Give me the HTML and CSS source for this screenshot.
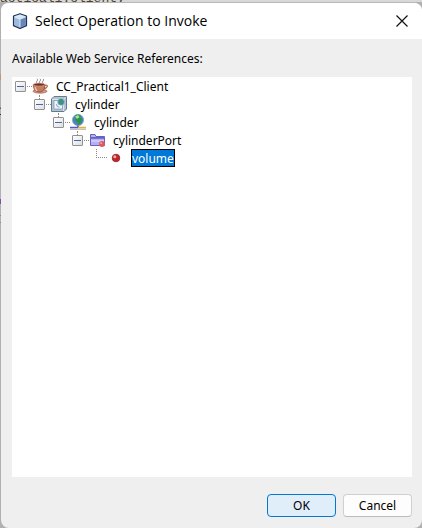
FILE: index.html
```html
<!DOCTYPE html>
<html lang="en">
<head>
<meta charset="utf-8">
<meta name="viewport" content="width=device-width, initial-scale=1">
<title>Select Operation to Invoke</title>
<link rel="stylesheet" href="styles.css">
</head>
<body>
<div class="editor" aria-hidden="true"><span>actical1.client;</span></div>
<main class="dialog" role="dialog" aria-labelledby="title">
  <header class="titlebar">
    <svg class="app-icon" viewBox="0 0 16 16">
      <path d="M8 .7 14.500 3v9.600L8 15.500 1.500 12.600V3z" fill="#8fb0d8" stroke="#253055" stroke-width="1.200" stroke-linejoin="round"/>
      <path d="M2.200 3.500 8 1.500l5.800 2L8 6z" fill="#d8e8f6"/>
      <path d="M2.200 4 8 6.300v8.300l-5.800-2.500z" fill="#9cbade"/>
      <path d="M13.800 4 8 6.300v8.300l5.800-2.500z" fill="#6787b8"/>
      <path d="M2.500 4 8 6.200 13.500 4M8 6.200V14" fill="none" stroke="#eef6fc" stroke-width=".8"/>
    </svg>
    <h1 id="title">Select Operation to Invoke</h1>
    <button class="close" type="button" aria-label="Close">
      <svg viewBox="0 0 12 12"><path d="M.5.5l11 11M11.500.5l-11 11" fill="none" stroke="#111" stroke-width="1.200"/></svg>
    </button>
  </header>
  <section class="content">
    <h2 id="tree-label">Available Web Service References:</h2>
    <div class="tree-panel">
      <ul class="tree" role="tree" aria-labelledby="tree-label">
        <li role="treeitem" aria-expanded="true">
          <div class="row">
            <button class="toggle" type="button" aria-label="Collapse"></button>
            <svg class="icon" viewBox="0 0 16 16">
              <path d="M5 5.500Q3.500 4 5 3T5 .8M8 5.500Q6.500 4 8 3T8 .8M11 5.500Q9.500 4 11 3T11 .8" fill="none" stroke="#8b8783" stroke-width=".9"/>
              <ellipse cx="8" cy="13.200" rx="7" ry="2" fill="#d39a82" stroke="#8d5542" stroke-width=".6"/>
              <path d="M12.500 7.500q3.200-1 2.700 1-.8 2-4 2.500" fill="none" stroke="#b4684e" stroke-width="1.300"/>
              <path d="M1.300 6.500h11.700q.3 5-3.200 7.300H5Q1 11.500 1.300 6.500z" fill="#c47b61" stroke="#8a4632" stroke-width=".7"/>
              <ellipse cx="7.100" cy="6.600" rx="5.700" ry="1.500" fill="#713222" stroke="#dfaa93" stroke-width=".6"/>
              <path d="M3 9q.5 2.500 2.200 4" fill="none" stroke="#efc4b1" stroke-width="1.300"/>
            </svg>
            <span class="name">CC_Practical1_Client</span>
          </div>
          <ul role="group">
            <li role="treeitem" aria-expanded="true">
              <div class="row">
                <button class="toggle" type="button" aria-label="Collapse"></button>
                <svg class="icon" viewBox="0 0 16 16">
                  <path d="M.5 3 3 .5h12.500V13L13 15.500H.5z" fill="#b5c3d0" stroke="#627b92"/>
                  <path d="M1 3.500h11.500V15M12.500 3.500 15 1" fill="none" stroke="#edf3f8" stroke-width=".7"/>
                  <path d="M3 4.500h8.500v8.500H3z" fill="#eef5fa" stroke="#7890a5" stroke-width=".7"/>
                  <circle cx="10" cy="6" r="3.300" fill="#4b83b8" stroke="#8db7d2" stroke-width=".6"/>
                  <path d="M8.500 3.300q2-.9 3.500.7l-1.300.7 1.500 1.500-1.200 2.500-1-2-1.700-.8z" fill="#35a044"/>
                  <path d="M5.500 8a3 3 0 0 0 3 3.200" fill="none" stroke="#87a5bf"/>
                </svg>
                <span class="name">cylinder</span>
              </div>
              <ul role="group">
                <li role="treeitem" aria-expanded="true">
                  <div class="row">
                    <button class="toggle" type="button" aria-label="Collapse"></button>
                    <svg class="icon" viewBox="0 0 16 16">
                      <circle cx="8" cy="6" r="5.600" fill="#4e83b6" stroke="#82a9c8" stroke-width=".8"/>
                      <path d="M5 1.500Q8-.3 11 1.500l-1.500 2 2.500 1-1 4-2.500 2.500-.8-3-2.700-1.500.5-2.300z" fill="#299641"/>
                      <path d="M5 2.500 8 1l1.500 2L7 5z" fill="#b2d9a2"/>
                      <path d="M8 11.500V14" stroke="#4c5269" stroke-width="1.500"/>
                      <path d="M0 13.500h8" stroke="#5358c4" stroke-width="1.500"/>
                      <path d="M8 13.500h8" stroke="#e2b044" stroke-width="1.500"/>
                      <path d="M0 15.200h8" stroke="#8d80ac" stroke-width=".8"/>
                      <path d="M8 15.200h8" stroke="#b09060" stroke-width=".8"/>
                    </svg>
                    <span class="name">cylinder</span>
                  </div>
                  <ul role="group">
                    <li role="treeitem" aria-expanded="true">
                      <div class="row">
                        <button class="toggle" type="button" aria-label="Collapse"></button>
                        <svg class="icon" viewBox="0 0 16 16">
                          <path d="M1.500 13.500v-11H6l1 2h8.500v9z" fill="#b3b0f4" stroke="#6762bd"/>
                          <path d="M2 5h13v1.700H2z" fill="#6762bd"/>
                          <path d="M2 8h13v2H2z" fill="#cbc9fc"/>
                          <circle cx="13" cy="12" r="2.900" fill="#dc5a5c"/>
                          <circle cx="12.200" cy="11.200" r="1" fill="#f3a7a5"/>
                        </svg>
                        <span class="name">cylinderPort</span>
                      </div>
                      <ul role="group">
                        <li role="treeitem" aria-selected="true">
                          <div class="row">
                            <span class="leaf-line"></span>
                            <svg class="icon" viewBox="0 0 16 16">
                              <circle cx="8" cy="8" r="3.800" fill="#c5242b" stroke="#8c2528" stroke-width=".8"/>
                              <circle cx="6.800" cy="6.700" r="1.500" fill="#f0aaa6"/>
                            </svg>
                            <span class="name selected">volume</span>
                          </div>
                        </li>
                      </ul>
                    </li>
                  </ul>
                </li>
              </ul>
            </li>
          </ul>
        </li>
      </ul>
    </div>
  </section>
  <footer class="actions">
    <button class="btn primary" type="button">OK</button>
    <button class="btn" type="button">Cancel</button>
  </footer>
</main>
</body>
</html>
```
FILE: styles.css
```css
* { box-sizing: border-box; }
body {
  margin: 0;
  min-height: 100vh;
  display: flex;
  flex-direction: column;
  /* edge of the editor that shows beside the dialog */
  background: linear-gradient(
    #b0b0b0 74px, #b39a80 74px 80px, #b0b0b0 80px 107px, #b08040 107px 108px,
    #4060a0 108px 109px, #b0b0b0 109px 114px, #303030 114px 115px,
    #b0b0b0 115px 199px, #8050a8 199px 204px, #b0b0b0 204px 215px,
    #888 215px 216px, #b0b0b0 216px 222px, #888 222px 223px, #b0b0b0 223px);
  color: #000;
  font: 12px/18px "Noto Sans", sans-serif;
}
h1, h2, ul { margin: 0; padding: 0; font: inherit; }
ul { list-style: none; }
button { font: inherit; color: inherit; padding: 0; }
.editor {
  height: 2px;
  position: relative;
  background: #d8d8d8;
}
.editor span {
  position: absolute;
  left: 0;
  bottom: -5px;
  font: 13px/16px "Liberation Mono", monospace;
  color: #4d4030;
}
.dialog {
  flex: 1;
  position: relative;
  display: flex;
  flex-direction: column;
  margin-left: 1px;
  background: #efefef;
  border-top: 1px solid #b8b8b8;
  border-radius: 8px;
  overflow: hidden;
}
.titlebar {
  height: 36px;
  display: flex;
  align-items: center;
  gap: 7px;
  padding: 0 14px 0 11px;
  background: #fff;
}
.app-icon { width: 16px; height: 16px; }
.titlebar h1 { flex: 1; font: 14px/20px "Open Sans", sans-serif; }
.close { width: 12px; height: 12px; border: 0; background: none; }
.close svg { display: block; }
.content {
  flex: 1;
  display: flex;
  flex-direction: column;
  gap: 9px;
  padding: 11px 10px 0 11px;
}
.tree-panel { flex: 1; background: #fff; }
.tree { padding-left: 3px; }
.tree ul { padding-left: 19px; }
.row { display: flex; align-items: center; height: 18px; }
.toggle {
  position: relative;
  width: 11px;
  height: 11px;
  border: 1px solid #919191;
  border-radius: 1px;
  background: linear-gradient(#4468ad, #4468ad) center / 7px 1px no-repeat, linear-gradient(135deg, #fff, #dedede);
}
.toggle::after {
  content: "";
  position: absolute;
  left: 11px;
  top: 4px;
  width: 5px;
  border-top: 1px dotted #888;
}
.tree ul .toggle::before {
  content: "";
  position: absolute;
  left: 4px;
  top: -5px;
  height: 4px;
  border-left: 1px dotted #888;
}
.leaf-line {
  width: 11px;
  height: 9px;
  margin: 0 1px 9px 5px;
  border: dotted #888;
  border-width: 0 0 1px 1px;
}
.icon { width: 16px; height: 16px; margin: 0 7px 0 6px; }
.leaf-line + .icon { margin-left: 0; }
.name { border: 1px solid transparent; padding-top: 2px; line-height: 14px; }
.selected { background: #0078d7; color: #fff; border-color: #000; }
.actions {
  display: flex;
  justify-content: flex-end;
  gap: 7px;
  padding: 17px 10px 11px;
}
.btn {
  width: 69px;
  height: 23px;
  border: 1px solid #d0d0d0;
  border-bottom-color: #bbb;
  border-radius: 4px;
  background: #fdfdfd;
}
.primary { border-color: #0078d4; background: #e0eef9; }
```
